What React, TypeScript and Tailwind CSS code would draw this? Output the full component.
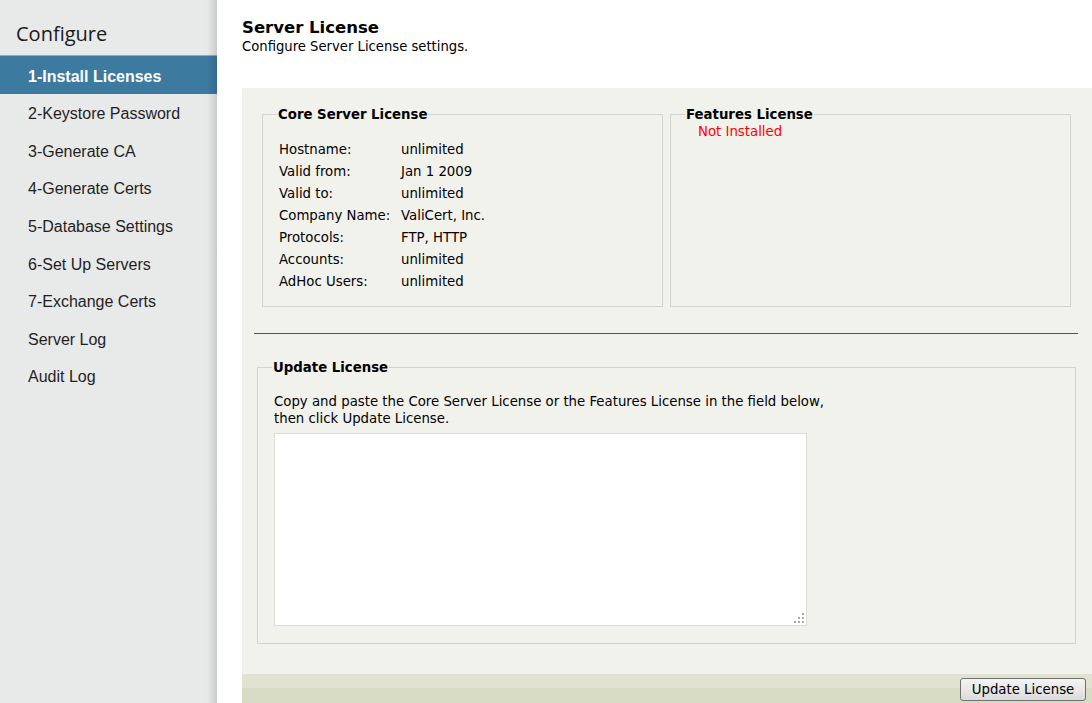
import React from "react";

const steps = [
  "1-Install Licenses",
  "2-Keystore Password",
  "3-Generate CA",
  "4-Generate Certs",
  "5-Database Settings",
  "6-Set Up Servers",
  "7-Exchange Certs",
  "Server Log",
  "Audit Log",
];

const coreRows: [string, string][] = [
  ["Hostname:", "unlimited"],
  ["Valid from:", "Jan 1 2009"],
  ["Valid to:", "unlimited"],
  ["Company Name:", "ValiCert, Inc."],
  ["Protocols:", "FTP, HTTP"],
  ["Accounts:", "unlimited"],
  ["AdHoc Users:", "unlimited"],
];

function Sidebar() {
  return (
    <aside className="relative w-[217px] shrink-0 bg-[#e8e9e9]">
      <div className="h-[55px] pl-4 pt-[20px] text-[20px] leading-[28px] text-[#1a1a1a] font-['Open_Sans',sans-serif]">
        Configure
      </div>
      <div className="h-px bg-[#a3a5a6]" />
      <nav className="flex flex-col font-['Liberation_Sans',Arial,sans-serif] text-[16px]">
        {steps.map((s, i) => (
          <div
            key={s}
            className={
              i === 0
                ? "h-[38px] flex items-center pl-7 pt-[3px] bg-[#3d7a9f] text-white font-bold"
                : "h-[37.6px] flex items-center pl-7 pt-[3px] text-[#1f1f1f]"
            }
          >
            {s}
          </div>
        ))}
      </nav>
      {/* right edge shadow */}
      <div className="pointer-events-none absolute top-0 right-0 h-full w-[10px] bg-gradient-to-r from-transparent to-[rgba(0,0,0,0.13)]" />
    </aside>
  );
}

function ResizeDots() {
  const dots = [
    [8, 0],
    [4, 4],
    [8, 4],
    [0, 8],
    [4, 8],
    [8, 8],
  ];
  return (
    <svg className="pointer-events-none absolute right-[3px] bottom-[3px]" width="10" height="10" viewBox="0 0 10 10">
      {dots.map(([x, y]) => (
        <rect key={`${x}-${y}`} x={x} y={y} width="2" height="2" fill="#a8a8a8" />
      ))}
    </svg>
  );
}

export default function App() {
  return (
    <div className="flex h-[703px] w-full overflow-hidden bg-white font-['DejaVu_Sans',Verdana,sans-serif] text-[13.3px] text-black">
      <Sidebar />

      <main className="flex flex-1 flex-col pl-[25px]">
        <header className="h-[88px] pt-[18px]">
          <h1 className="text-[16.5px] font-bold leading-[20px]">Server License</h1>
          <p className="text-[13.2px] leading-[18px]">Configure Server License settings.</p>
        </header>

        <section className="flex flex-1 flex-col bg-[#f2f2ed]">
          <div className="flex-1 pt-[17px]">
            <div className="flex gap-[7px] pl-[20px]">
              <fieldset className="h-[202px] w-[401px] border border-[#d3d3d0] pl-[14px] pt-[16px]">
                <legend className="px-[1px] pt-[2px] font-bold leading-[16px]">Core Server License</legend>
                <div className="pl-[2px]">
                  {coreRows.map(([k, v]) => (
                    <div key={k} className="flex h-[22px] items-center">
                      <span className="w-[122px]">{k}</span>
                      <span>{v}</span>
                    </div>
                  ))}
                </div>
              </fieldset>

              <fieldset className="h-[202px] w-[401px] border border-[#d3d3d0] pl-[14px]">
                <legend className="px-[1px] pt-[2px] font-bold leading-[16px]">Features License</legend>
                <p className="pl-[13px] pt-[1px] leading-[16px] text-[#ff0000]">Not Installed</p>
              </fieldset>
            </div>

            <div className="ml-[12px] mr-[14px] mt-[26px] h-px bg-[#555555]" />

            <fieldset className="ml-[15px] mr-[16px] mt-[24px] border border-[#d3d3d0] pb-[17px] pl-[14px] pt-[17px]">
              <legend className="px-[1px] pt-[2px] font-bold leading-[16px]">Update License</legend>
              <p className="pl-[2px] leading-[17px]">
                Copy and paste the Core Server License or the Features License in the field below,
                <br />
                then click Update License.
              </p>
              <div className="relative ml-[2px] mt-[6px] h-[193px] w-[533px]">
                <textarea className="block h-full w-full resize-none border border-[#dcdcdc] bg-white" />
                <ResizeDots />
              </div>
            </fieldset>
          </div>

          <footer className="flex h-[29px] justify-end bg-gradient-to-b from-[#e1e3d0] from-50% to-[#d9dcc5] to-50% pr-[6px] pt-[4px]">
            <button className="h-[23px] w-[126px] rounded-[3px] border border-[#707070] bg-gradient-to-b from-[#f4f4f4] to-[#dcdcdc] text-[13.3px] text-black">
              Update License
            </button>
          </footer>
        </section>
      </main>
    </div>
  );
}
